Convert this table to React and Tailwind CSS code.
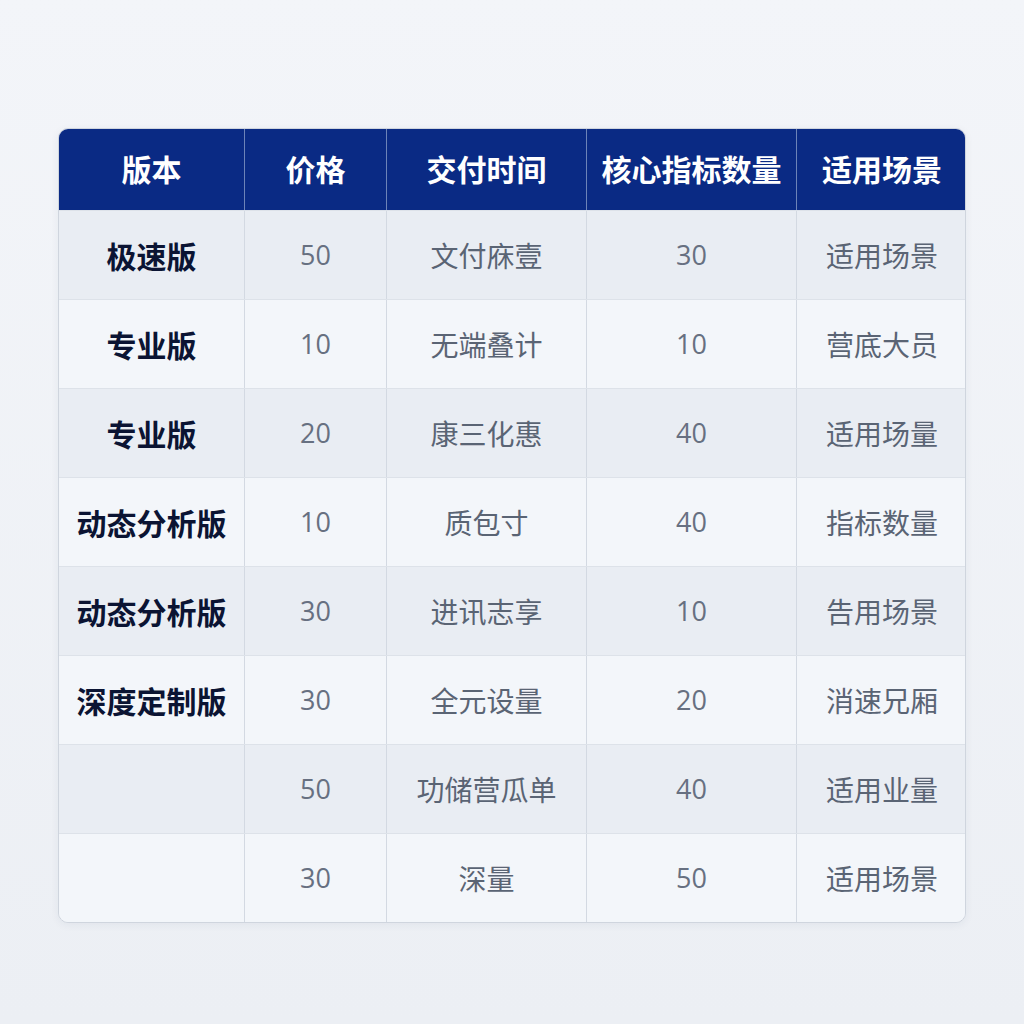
import React from "react";

const columns = ["版本", "价格", "交付时间", "核心指标数量", "适用场景"];

const rows = [
  ["极速版", "50", "文付庥壹", "30", "适用场景"],
  ["专业版", "10", "无端叠计", "10", "营底大员"],
  ["专业版", "20", "康三化惠", "40", "适用场量"],
  ["动态分析版", "10", "质包寸", "40", "指标数量"],
  ["动态分析版", "30", "进讯志享", "10", "告用场景"],
  ["深度定制版", "30", "全元设量", "20", "消速兄厢"],
  ["", "50", "功储营瓜单", "40", "适用业量"],
  ["", "30", "深量", "50", "适用场景"],
];

const cjk = { fontFamily: '"Noto Sans CJK SC", "Noto Sans", sans-serif' };
const num = { fontFamily: '"Open Sans", "Noto Sans", sans-serif' };

const App = () => {
  return (
    <div className="w-full h-[1024px] bg-gradient-to-b from-[#f3f5f9] to-[#eceff4] pt-[128px] pl-[58px]">
      <div className="w-[908px] rounded-[10px] overflow-hidden border border-[#cfd5de] shadow-[0_2px_8px_rgba(30,50,90,0.06)]">
        {/* Header */}
        <div className="grid grid-cols-[185px_142px_200px_210px_171px] h-[81px] bg-[#0a2a84]">
          {columns.map((col, i) => (
            <div
              key={col}
              className={`flex items-center justify-center pb-[3px] text-white font-bold text-[30px] ${
                i > 0 ? "border-l border-[#6d83b8]" : ""
              }`}
              style={cjk}
            >
              {col}
            </div>
          ))}
        </div>

        {/* Body */}
        {rows.map((row, r) => (
          <div
            key={r}
            className={`grid grid-cols-[185px_142px_200px_210px_171px] h-[89px] border-t border-[#dde2e9] ${
              r % 2 === 0 ? "bg-[#e9edf3]" : "bg-[#f3f6fa]"
            }`}
          >
            {row.map((cell, c) => {
              const isNum = c === 1 || c === 3;
              return (
                <div
                  key={c}
                  className={`flex items-center justify-center ${
                    c > 0 ? "border-l border-[#d3d9e2]" : ""
                  } ${
                    c === 0
                      ? "text-[#0b1433] font-bold text-[30px]"
                      : isNum
                      ? "text-[#677081] text-[27px]"
                      : "text-[#5a6474] text-[28px]"
                  }`}
                  style={isNum ? num : cjk}
                >
                  {cell}
                </div>
              );
            })}
          </div>
        ))}
      </div>
    </div>
  );
};

export default App;
